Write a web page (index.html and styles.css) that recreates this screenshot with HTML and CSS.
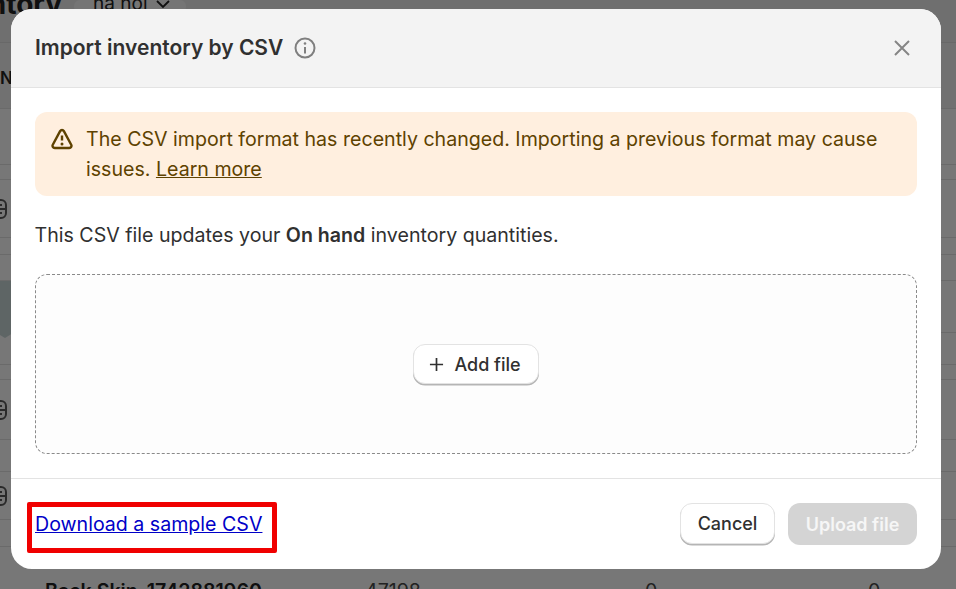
FILE: index.html
```html
<!DOCTYPE html>
<html lang="en">
<head>
<meta charset="utf-8">
<title>Import inventory by CSV</title>
<link rel="stylesheet" href="styles.css">
</head>
<body>
<div class="page">
  <div class="page-head"><span class="page-title">Inventory</span><span class="chip">ha noi <svg class="chev" viewBox="0 0 16 16"><path d="M2 5l6 6 6-6"/></svg></span></div>
  <div class="row h67 row-head">N</div>
  <div class="row h56"></div>
  <div class="row h15"></div>
  <div class="row h58"><svg class="row-icon" viewBox="0 0 16 20"><rect x="1" y="1" width="14" height="18" rx="5"/><path d="M1 10h14M5 6h6M5 14h6"/></svg></div>
  <div class="row h17"></div>
  <div class="row h26"></div>
  <div class="row h52"><div class="tip"></div></div>
  <div class="row h32"></div>
  <div class="row h15"></div>
  <div class="row h60"><svg class="row-icon" viewBox="0 0 16 20"><rect x="1" y="1" width="14" height="18" rx="5"/><path d="M1 10h14M5 6h6M5 14h6"/></svg></div>
  <div class="row h32"></div>
  <div class="row h48"><svg class="row-icon" viewBox="0 0 16 20"><rect x="1" y="1" width="14" height="18" rx="5"/><path d="M1 10h14M5 6h6M5 14h6"/></svg></div>
  <div class="row h27"></div>
  <div class="row-data"><span class="name">Back Skin-1742881960</span><span class="sku">47198</span><span class="num">0</span><span class="num">0</span></div>
</div>
<div class="backdrop"></div>
<section class="modal">
  <header class="modal-head">
    <h1 class="modal-title">Import inventory by CSV</h1>
    <svg class="info" viewBox="0 0 22 22"><circle cx="11" cy="11" r="9.500"/><path d="M11 10v6.500"/><circle class="dot" cx="11" cy="6.500" r="1.300"/></svg>
    <svg class="close" viewBox="0 0 18 18"><path d="M2 2l14 14M16 2L2 16"/></svg>
  </header>
  <div class="modal-body">
    <div class="banner">
      <svg class="warn" viewBox="0 0 22 22"><path d="M11 2c.8 0 1.500.4 1.900 1.100l7.300 13.600c.8 1.500-.2 3.300-1.900 3.300H3.700c-1.700 0-2.700-1.800-1.900-3.300L9.100 3.100C9.500 2.400 10.200 2 11 2z"/><path d="M11 7.500v5"/><circle class="dot" cx="11" cy="16" r="1.500"/></svg>
      <p class="banner-text">The CSV import format has recently changed. Importing a previous format may cause issues. <a class="learn">Learn more</a></p>
    </div>
    <p class="desc">This CSV file updates your <strong>On hand</strong> inventory quantities.</p>
    <div class="drop">
      <button class="btn add"><svg class="plus" viewBox="0 0 16 16"><path d="M8 1v14M1 8h14"/></svg>Add file</button>
    </div>
  </div>
  <footer class="modal-foot">
    <div class="marked"><a class="sample">Download a sample CSV</a></div>
    <div class="actions">
      <button class="btn cancel">Cancel</button>
      <button class="btn upload">Upload file</button>
    </div>
  </footer>
</section>
</body>
</html>
```
FILE: styles.css
```css
* { box-sizing: border-box; }
html, body { margin: 0; height: 100%; }
body { width: 956px; height: 589px; overflow: hidden; background: #f1f1f1; font-family: Inter, "Liberation Sans", sans-serif; color: #303030; position: relative; }
.page { height: 589px; overflow: hidden; }
.page-head { height: 43px; display: flex; align-items: flex-start; gap: 12px; background: #dedede; border-bottom: 1px solid #d0d0d0; overflow: hidden; }
.page-title { font-size: 28px; font-weight: 700; margin-left: -69px; margin-top: -11px; line-height: 30px; color: #202020; flex: none; }
.chip { background: #eaeaea; border-radius: 6px; height: 13px; width: 112px; padding: 0 15px 0 19px; font-size: 19px; line-height: 18px; display: flex; justify-content: space-between; align-items: flex-end; flex: none; color: #202020; }
.chev { width: 16px; height: 16px; flex: none; margin-bottom: 1px; fill: none; stroke: #202020; stroke-width: 1.8; }
.row { border-bottom: 1px solid #d4d4d4; background: #eeeeee; display: flex; align-items: center; }
.row-head { background: #e2e2e2; font-size: 17px; font-weight: 600; color: #202020; padding-top: 5px; }
.tip { position: relative; width: 11px; height: 52px; background: #bccaca; }
.tip::after { content: ""; position: absolute; left: -3px; bottom: -5px; width: 0; height: 0; border-left: 8px solid transparent; border-right: 8px solid transparent; border-top: 5px solid #bccaca; }
.h15 { height: 15px; }
.h17 { height: 17px; }
.h26 { height: 26px; }
.h27 { height: 27px; }
.h32 { height: 32px; }
.h48 { height: 48px; }
.h52 { height: 52px; }
.h56 { height: 56px; }
.h58 { height: 58px; }
.h60 { height: 60px; }
.h67 { height: 66px; }
.row-icon { width: 16px; height: 20px; margin-left: -9px; fill: none; stroke: #555; stroke-width: 2; flex: none; }
.row-data { height: 42px; background: #eeeeee; padding: 33px 0 0 45px; display: grid; grid-template-columns: 320px 280px 223px 20px; font-size: 19.6px; line-height: 22px; font-weight: 600; color: #202020; }
.sku, .num { font-weight: 400; color: #444; }
.backdrop { position: absolute; inset: 0; background: rgba(0, 0, 0, 0.5); }
.modal { position: absolute; left: 11px; top: 9px; width: 930px; height: 560px; background: #fff; border-radius: 21px; overflow: hidden; display: flex; flex-direction: column; }
.modal-head { height: 79px; flex: none; background: #f3f3f3; border-bottom: 1px solid #e3e3e3; display: flex; align-items: center; padding: 0 30px 0 24px; }
.modal-title { margin: 0; font-size: 21px; line-height: 28px; font-weight: 600; color: #303030; }
.info { width: 22px; height: 22px; margin-left: 11px; fill: none; stroke: #7f7f7f; stroke-width: 2; }
.info .dot { fill: #7f7f7f; stroke: none; }
.close { width: 18px; height: 18px; margin-left: auto; fill: none; stroke: #858585; stroke-width: 2; }
.modal-body { flex: 1; padding: 24px 24px 0; display: flex; flex-direction: column; }
.banner { height: 84px; flex: none; background: #ffefdf; border-radius: 12px; display: flex; padding: 12px 16px; gap: 13px; color: #5e4200; }
.warn { width: 22px; height: 22px; flex: none; margin-top: 4px; fill: none; stroke: #5e4200; stroke-width: 2.400; }
.warn .dot { fill: #5e4200; stroke: none; }
.banner-text { margin: 0; font-size: 19.6px; line-height: 30px; }
.learn { text-decoration: underline; }
.desc { margin: 24px 0 0 -0.5px; font-size: 19.6px; line-height: 30px; color: #303030; }
.desc strong { font-weight: 600; }
.drop { margin-top: 24px; height: 180px; flex: none; background: #fdfdfd; border: 1px dashed #8a8a8a; border-radius: 12px; display: flex; align-items: center; justify-content: center; }
.btn { font-family: inherit; font-size: 18px; font-weight: 500; border-radius: 12px; border: 1px solid #e3e3e3; background: #fff; color: #303030; display: inline-flex; align-items: center; justify-content: center; box-shadow: 0 1.5px 0 #b5b5b5; padding: 0; }
.add { width: 126px; height: 40px; gap: 10px; padding-right: 2px; }
.plus { width: 15px; height: 15px; fill: none; stroke: #303030; stroke-width: 1.8; }
.modal-foot { height: 91px; flex: none; border-top: 1px solid #e3e3e3; display: flex; align-items: center; justify-content: space-between; padding: 0 24px; }
.marked { position: relative; height: 30px; }
.marked::after { content: ""; position: absolute; left: -8px; right: -15px; top: -7px; bottom: -14px; border: 5px solid #f00000; border-radius: 2px; }
.sample { color: #0000c8; text-decoration: underline; font-size: 19.6px; line-height: 30px; }
.actions { display: flex; gap: 13px; }
.cancel { width: 95px; height: 41px; }
.upload { width: 129px; height: 42px; background: #d4d4d4; border: 0; box-shadow: none; color: #f6f6f6; font-weight: 600; }
```
